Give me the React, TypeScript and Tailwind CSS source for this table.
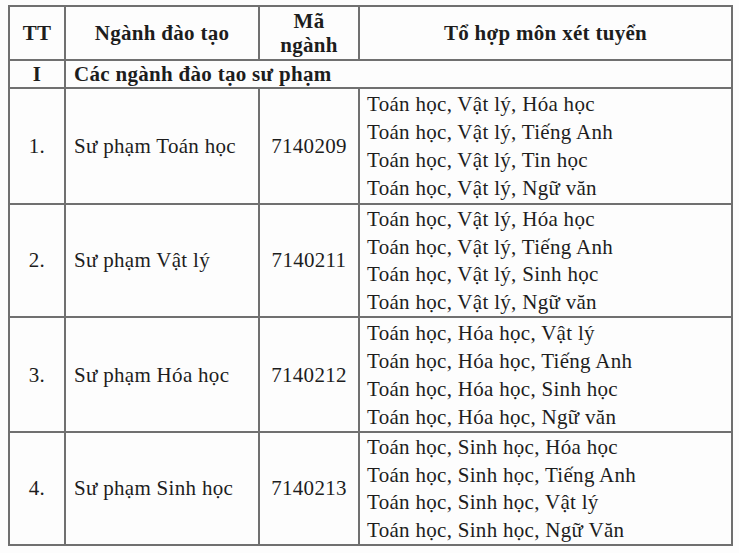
const rows = [
  {
    tt: "1.",
    name: "Sư phạm Toán học",
    code: "7140209",
    h: "h-[116px] leading-[28px]",
    subjects: [
      "Toán học, Vật lý, Hóa học",
      "Toán học, Vật lý, Tiếng Anh",
      "Toán học, Vật lý, Tin học",
      "Toán học, Vật lý, Ngữ văn",
    ],
  },
  {
    tt: "2.",
    name: "Sư phạm Vật lý",
    code: "7140211",
    h: "h-[112px] leading-[27.5px]",
    subjects: [
      "Toán học, Vật lý, Hóa học",
      "Toán học, Vật lý, Tiếng Anh",
      "Toán học, Vật lý, Sinh học",
      "Toán học, Vật lý, Ngữ văn",
    ],
  },
  {
    tt: "3.",
    name: "Sư phạm Hóa học",
    code: "7140212",
    h: "h-[114px] leading-[28px]",
    subjects: [
      "Toán học, Hóa học, Vật lý",
      "Toán học, Hóa học, Tiếng Anh",
      "Toán học, Hóa học, Sinh học",
      "Toán học, Hóa học, Ngữ văn",
    ],
  },
  {
    tt: "4.",
    name: "Sư phạm Sinh học",
    code: "7140213",
    h: "h-[112px] leading-[27.5px]",
    subjects: [
      "Toán học, Sinh học, Hóa học",
      "Toán học, Sinh học, Tiếng Anh",
      "Toán học, Sinh học, Vật lý",
      "Toán học, Sinh học, Ngữ Văn",
    ],
  },
];

const cell = "border-2 border-[#707070]";

export default function App() {
  return (
    <div className="w-[739px] h-[553px] bg-[#fdfdfd] pt-[5px] pl-[8px] overflow-hidden text-[#1d1d1d] font-['Liberation_Serif','Times_New_Roman',serif] text-[21px] tracking-[0.3px] leading-[28px]">
      <table className="border-collapse table-fixed w-[723px]">
        <colgroup>
          <col className="w-[56px]" />
          <col className="w-[194px]" />
          <col className="w-[100px]" />
          <col className="w-[373px]" />
        </colgroup>
        <thead>
          <tr className="h-[54px] font-bold">
            <th className={`${cell} text-center`}>TT</th>
            <th className={`${cell} text-center`}>Ngành đào tạo</th>
            <th className={`${cell} text-center leading-[24px]`}>
              Mã
              <br />
              ngành
            </th>
            <th className={`${cell} text-center`}>Tổ hợp môn xét tuyển</th>
          </tr>
        </thead>
        <tbody>
          <tr className="h-[26px] font-bold leading-[26px]">
            <td className={`${cell} text-center`}>I</td>
            <td colSpan={3} className={`${cell} px-[8px]`}>
              Các ngành đào tạo sư phạm
            </td>
          </tr>
          {rows.map((row) => (
            <tr key={row.tt} className={row.h}>
              <td className={`${cell} text-center`}>{row.tt}</td>
              <td className={`${cell} px-[8px]`}>{row.name}</td>
              <td className={`${cell} text-center`}>{row.code}</td>
              <td className={`${cell} pl-[7px] pr-[8px] align-top pt-[1px]`}>
                {row.subjects.map((s) => (
                  <div key={s}>{s}</div>
                ))}
              </td>
            </tr>
          ))}
        </tbody>
      </table>
    </div>
  );
}
